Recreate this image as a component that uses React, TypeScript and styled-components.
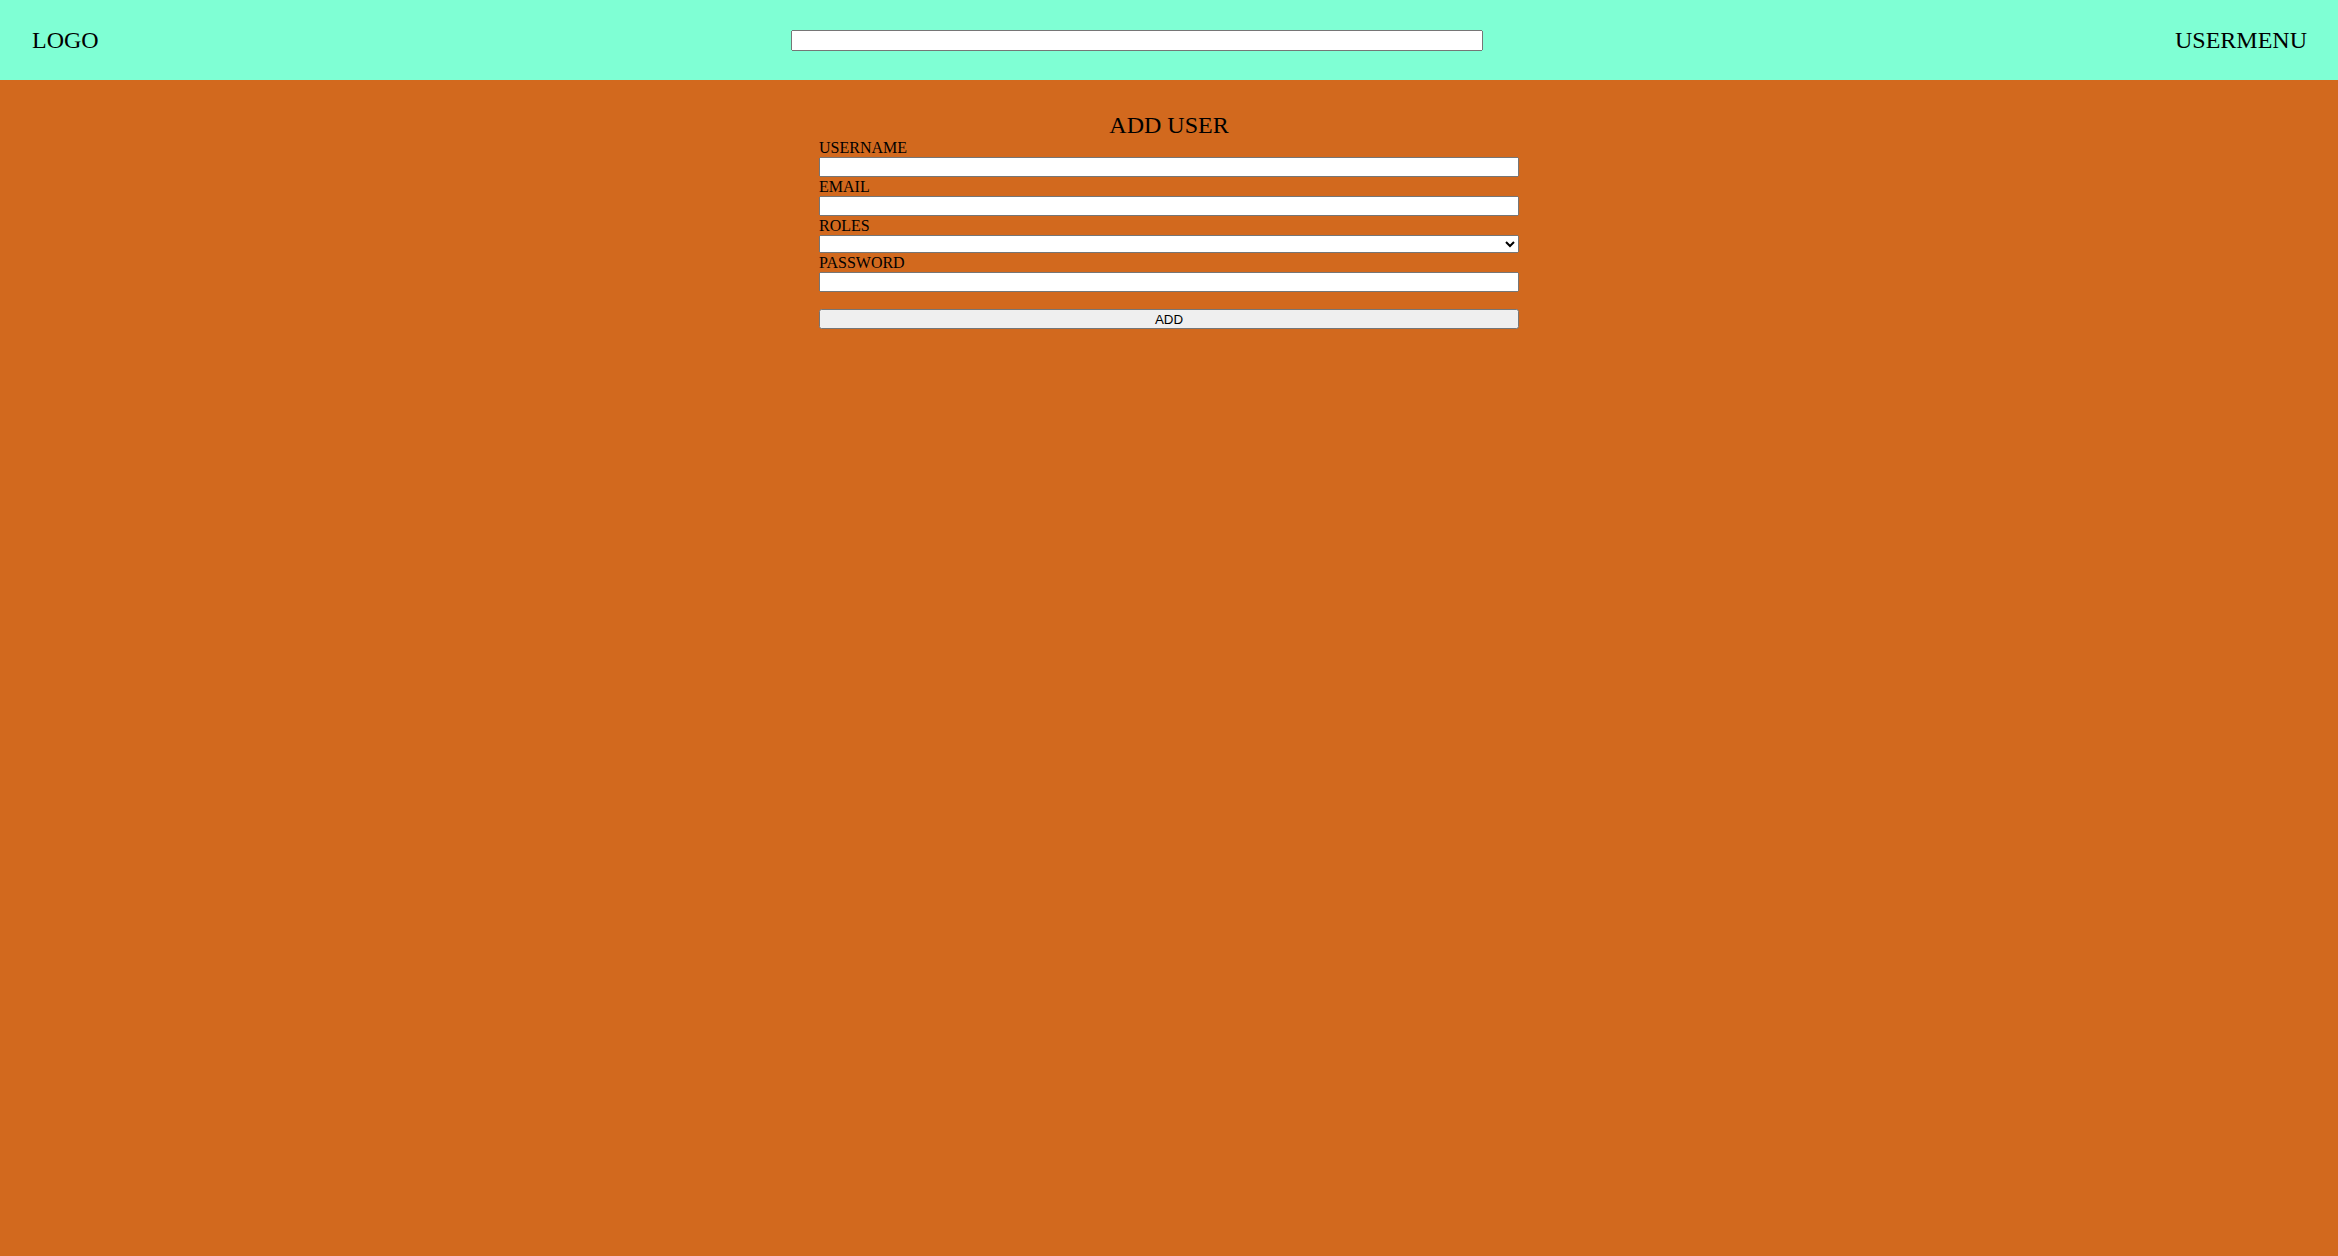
import React from "react";
import styled, { createGlobalStyle } from "styled-components";

const GlobalStyle = createGlobalStyle`
  html, body {
    margin: 0;
    padding: 0;
    background: #d2691e;
    font-family: "Liberation Serif", "Times New Roman", serif;
    color: #000;
  }
`;

const Header = styled.header`
  height: 80px;
  background: #7fffd4;
  display: flex;
  align-items: center;
  justify-content: space-between;
  padding: 0 31px 0 32px;
`;

const HeaderText = styled.div`
  font-size: 24px;
  line-height: 27.6px;
  padding-top: 2px;
`;

const SearchInput = styled.input`
  width: 692px;
  height: 21px;
  box-sizing: border-box;
  font-family: "Liberation Sans", Arial, sans-serif;
  font-size: 13.33px;
`;

const Main = styled.main`
  padding-top: 33px;
  display: flex;
  justify-content: center;
`;

const Form = styled.form`
  width: 700px;
  display: flex;
  flex-direction: column;
`;

const Title = styled.h2`
  margin: 0;
  font-size: 24px;
  font-weight: normal;
  line-height: 25px;
  text-align: center;
`;

const Label = styled.label`
  display: block;
  font-size: 16px;
  line-height: 19px;
`;

const TextInput = styled.input`
  display: block;
  width: 100%;
  height: 20px;
  margin: 0;
  box-sizing: border-box;
  font-family: "Liberation Sans", Arial, sans-serif;
  font-size: 13.33px;
`;

const Select = styled.select`
  display: block;
  width: 100%;
  height: 18px;
  margin: 0;
  box-sizing: border-box;
  font-family: "Liberation Sans", Arial, sans-serif;
  font-size: 13.33px;
`;

const SubmitButton = styled.button`
  display: block;
  width: 100%;
  height: 20px;
  margin: 17px 0 0;
  padding: 0 6px;
  box-sizing: border-box;
  font-family: "Liberation Sans", Arial, sans-serif;
  font-size: 13.33px;
`;

export default function App() {
  return (
    <>
      <GlobalStyle />
      <Header>
        <HeaderText>LOGO</HeaderText>
        <SearchInput type="text" />
        <HeaderText>USERMENU</HeaderText>
      </Header>
      <Main>
        <Form onSubmit={(e) => e.preventDefault()}>
          <Title>ADD USER</Title>
          <Label htmlFor="username">USERNAME</Label>
          <TextInput id="username" type="text" />
          <Label htmlFor="email">EMAIL</Label>
          <TextInput id="email" type="email" />
          <Label htmlFor="roles">ROLES</Label>
          <Select id="roles" defaultValue="">
            <option value=""></option>
          </Select>
          <Label htmlFor="password">PASSWORD</Label>
          <TextInput id="password" type="password" />
          <SubmitButton type="submit">ADD</SubmitButton>
        </Form>
      </Main>
    </>
  );
}
